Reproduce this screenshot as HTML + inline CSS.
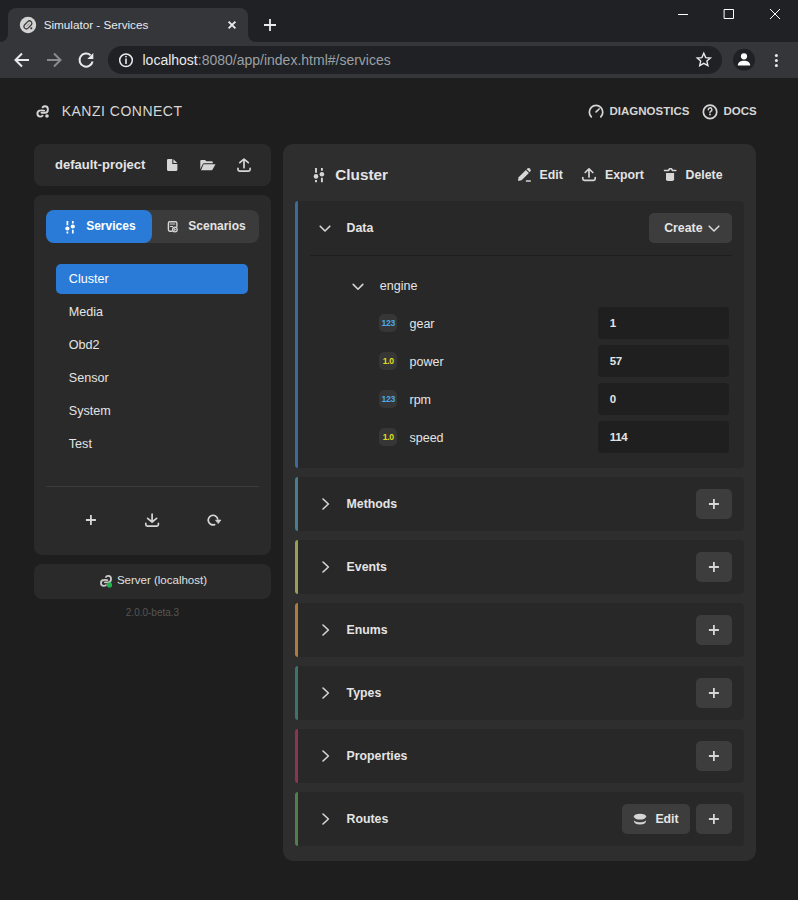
<!DOCTYPE html>
<html><head><meta charset="utf-8">
<style>
*{margin:0;padding:0;box-sizing:border-box}
html,body{width:798px;height:900px;overflow:hidden;background:#1e1e1e;font-family:"Liberation Sans",sans-serif}
.a{position:absolute}
.t{position:absolute;white-space:nowrap;line-height:1}
svg{position:absolute;overflow:visible}
/* chrome */
#strip{left:0;top:0;width:798px;height:42px;background:#202124}
#tab{left:8px;top:8px;width:240px;height:34px;background:#35363a;border-radius:8px 8px 0 0}
#toolbar{left:0;top:42px;width:798px;height:36px;background:#35363a}
#omni{left:108px;top:46px;width:614px;height:28px;background:#202124;border-radius:14px}
/* page */
.box{position:absolute;background:#2a2a2a;border-radius:8px}
.panel{position:absolute;background:#2e2e2e;border-radius:10px}
.sec{position:absolute;left:295px;width:449px;background:#282828;border-radius:4px}
.stripe{position:absolute;left:0;top:0;bottom:0;width:3px;border-radius:3px 0 0 3px}
.btn{position:absolute;background:#3d3d3d;border-radius:5px}
.inp{position:absolute;left:598px;width:131px;height:32px;background:#1f1f1f;border-radius:4px}
.badge{position:absolute;left:379px;width:18px;height:18px;background:#363636;border-radius:5px}
</style></head><body>
<div id="strip" class="a"></div>
<div id="tab" class="a"></div>
<div class="a" style="left:0;top:34px;width:8px;height:8px;background:#35363a"><div style="width:8px;height:8px;background:#202124;border-bottom-right-radius:8px"></div></div>
<div class="a" style="left:248px;top:34px;width:8px;height:8px;background:#35363a"><div style="width:8px;height:8px;background:#202124;border-bottom-left-radius:8px"></div></div>
<div id="toolbar" class="a"></div>
<div id="omni" class="a"></div>
<div class="t" style="left:43.7px;top:19.1px;font-size:11.7px;color:#e8eaed">Simulator - Services</div>
<div class="t" style="left:142.5px;top:53.15px;font-size:14px;color:#e8eaed">localhost<span style="color:#9aa0a6">:8080/app/index.html#/services</span></div>

<!-- header -->
<div class="t" style="left:61.7px;top:104.15px;font-size:14px;letter-spacing:0.5px;color:#d6d6d6">KANZI CONNECT</div>
<div class="t" style="left:609.5px;top:105.8px;font-size:11.5px;font-weight:bold;color:#d6d6d6">DIAGNOSTICS</div>
<div class="t" style="left:723.4px;top:105.8px;font-size:11.5px;font-weight:bold;color:#d6d6d6">DOCS</div>

<!-- sidebar -->
<div class="box" style="left:34px;top:144px;width:237px;height:42px"></div>
<div class="t" style="left:55px;top:158px;font-size:13px;font-weight:bold;color:#e4e4e4">default-project</div>
<div class="box" style="left:34px;top:195px;width:237px;height:360px"></div>
<div class="a" style="left:46px;top:210px;width:213px;height:33px;background:#3b3b3b;border-radius:8px"></div>
<div class="a" style="left:46px;top:210px;width:106px;height:33px;background:#2a7bd8;border-radius:8px"></div>
<div class="t" style="left:86.2px;top:219.8px;font-size:12px;font-weight:bold;color:#fff">Services</div>
<div class="t" style="left:188.3px;top:219.8px;font-size:12px;font-weight:bold;color:#e4e4e4">Scenarios</div>
<div class="a" style="left:56px;top:264px;width:192px;height:30px;background:#2a7bd8;border-radius:5px"></div>
<div class="t" style="left:68.8px;top:273.1px;font-size:12.6px;color:#fff">Cluster</div>
<div class="t" style="left:68.8px;top:306.1px;font-size:12.6px;color:#e4e4e4">Media</div>
<div class="t" style="left:68.8px;top:339.1px;font-size:12.6px;color:#e4e4e4">Obd2</div>
<div class="t" style="left:68.8px;top:372.1px;font-size:12.6px;color:#e4e4e4">Sensor</div>
<div class="t" style="left:68.8px;top:405.1px;font-size:12.6px;color:#e4e4e4">System</div>
<div class="t" style="left:68.8px;top:438.1px;font-size:12.6px;color:#e4e4e4">Test</div>
<div class="a" style="left:46px;top:486px;width:213px;height:1px;background:#3c3c3c"></div>
<div class="box" style="left:34px;top:564px;width:237px;height:35px"></div>
<div class="t" style="left:116.9px;top:575px;font-size:11.5px;color:#e0e0e0">Server (localhost)</div>
<div class="t" style="left:125.8px;top:607.5px;font-size:10px;color:#555">2.0.0-beta.3</div>

<!-- right panel -->
<div class="panel" style="left:283px;top:144px;width:473px;height:717px"></div>
<div class="t" style="left:335.3px;top:166.8px;font-size:15.3px;font-weight:bold;color:#e4e4e4">Cluster</div>
<div class="t" style="left:539.5px;top:168.9px;font-size:12.3px;font-weight:bold;color:#e4e4e4">Edit</div>
<div class="t" style="left:605px;top:168.9px;font-size:12.3px;font-weight:bold;color:#e4e4e4">Export</div>
<div class="t" style="left:685.6px;top:168.9px;font-size:12.3px;font-weight:bold;color:#e4e4e4">Delete</div>

<div class="sec" style="top:201px;height:267px"><div class="stripe" style="background:#3d6a9c"></div></div>
<div class="t" style="left:346.6px;top:221.79px;font-size:12.3px;font-weight:bold;color:#e4e4e4">Data</div>
<div class="sec" style="top:477px;height:54px"><div class="stripe" style="background:#467f8f"></div></div>
<div class="t" style="left:346.6px;top:497.59px;font-size:12.3px;font-weight:bold;color:#e4e4e4">Methods</div>
<div class="btn" style="left:696px;top:489px;width:36px;height:30px"></div>
<div class="sec" style="top:540px;height:54px"><div class="stripe" style="background:#9c9c56"></div></div>
<div class="t" style="left:346.6px;top:560.59px;font-size:12.3px;font-weight:bold;color:#e4e4e4">Events</div>
<div class="btn" style="left:696px;top:552px;width:36px;height:30px"></div>
<div class="sec" style="top:603px;height:54px"><div class="stripe" style="background:#b07a3e"></div></div>
<div class="t" style="left:346.6px;top:623.59px;font-size:12.3px;font-weight:bold;color:#e4e4e4">Enums</div>
<div class="btn" style="left:696px;top:615px;width:36px;height:30px"></div>
<div class="sec" style="top:666px;height:54px"><div class="stripe" style="background:#3b7370"></div></div>
<div class="t" style="left:346.6px;top:686.59px;font-size:12.3px;font-weight:bold;color:#e4e4e4">Types</div>
<div class="btn" style="left:696px;top:678px;width:36px;height:30px"></div>
<div class="sec" style="top:729px;height:54px"><div class="stripe" style="background:#8e3450"></div></div>
<div class="t" style="left:346.6px;top:749.59px;font-size:12.3px;font-weight:bold;color:#e4e4e4">Properties</div>
<div class="btn" style="left:696px;top:741px;width:36px;height:30px"></div>
<div class="sec" style="top:792px;height:54px"><div class="stripe" style="background:#4f7f4f"></div></div>
<div class="t" style="left:346.6px;top:812.59px;font-size:12.3px;font-weight:bold;color:#e4e4e4">Routes</div>
<div class="btn" style="left:696px;top:804px;width:36px;height:30px"></div>
<div class="btn" style="left:649px;top:213px;width:83px;height:30px"></div>
<div class="t" style="left:664.2px;top:221.59px;font-size:12.3px;font-weight:bold;color:#e4e4e4">Create</div>
<div class="btn" style="left:622px;top:804px;width:68px;height:30px"></div>
<div class="t" style="left:655.4px;top:812.59px;font-size:12.3px;font-weight:bold;color:#e4e4e4">Edit</div>
<div class="a" style="left:310px;top:255px;width:422px;height:1px;background:#1e1e1e"></div>
<div class="t" style="left:379.8px;top:280.4px;font-size:12.5px;color:#e4e4e4">engine</div>
<div class="inp" style="top:307px"></div>
<div class="t" style="left:609.7px;top:318.3px;font-size:11.5px;font-weight:bold;letter-spacing:-0.3px;color:#e4e4e4">1</div>
<div class="badge" style="top:314px"></div>
<div class="t" style="left:409.5px;top:318.4px;font-size:12.5px;color:#e4e4e4">gear</div>
<div class="inp" style="top:345px"></div>
<div class="t" style="left:609.7px;top:356.3px;font-size:11.5px;font-weight:bold;letter-spacing:-0.3px;color:#e4e4e4">57</div>
<div class="badge" style="top:352px"></div>
<div class="t" style="left:409.5px;top:356.4px;font-size:12.5px;color:#e4e4e4">power</div>
<div class="inp" style="top:383px"></div>
<div class="t" style="left:609.7px;top:394.3px;font-size:11.5px;font-weight:bold;letter-spacing:-0.3px;color:#e4e4e4">0</div>
<div class="badge" style="top:390px"></div>
<div class="t" style="left:409.5px;top:394.4px;font-size:12.5px;color:#e4e4e4">rpm</div>
<div class="inp" style="top:421px"></div>
<div class="t" style="left:609.7px;top:432.3px;font-size:11.5px;font-weight:bold;letter-spacing:-0.3px;color:#e4e4e4">114</div>
<div class="badge" style="top:428px"></div>
<div class="t" style="left:409.5px;top:432.4px;font-size:12.5px;color:#e4e4e4">speed</div>
<!-- chrome icons -->
<svg width="798" height="900" style="left:0;top:0" fill="none" stroke-linecap="round" stroke-linejoin="round">
  <!-- favicon -->
  <circle cx="28" cy="25" r="8.2" fill="#d3d3d3" stroke="none"/>
  <rect x="-4.6" y="-2.4" width="9.2" height="4.8" rx="2.4" transform="translate(27.9 24.9) rotate(-45)" stroke="#3a3a3a" stroke-width="1.3"/>
  <path d="M26.6 26.2 L29.2 23.6" stroke="#8a8a8a" stroke-width="1"/>
  <rect x="30.4" y="27.4" width="1.8" height="1.8" fill="#333" stroke="none"/>
  <!-- tab close -->
  <path d="M228.6 21.6 L235.4 28.4 M235.4 21.6 L228.6 28.4" stroke="#e8eaed" stroke-width="1.9" stroke-linecap="butt"/>
  <!-- new tab -->
  <path d="M270 19 V31 M264 25 H276" stroke="#e8eaed" stroke-width="1.8" stroke-linecap="butt"/>
  <!-- window controls -->
  <path d="M678 14.5 H688" stroke="#fff" stroke-width="1" stroke-linecap="butt"/>
  <rect x="724.5" y="9.5" width="9" height="9" stroke="#fff" stroke-width="1"/>
  <path d="M770 9 L780 19 M780 9 L770 19" stroke="#fff" stroke-width="1" stroke-linecap="butt"/>
  <!-- back / fwd -->
  <path d="M29 60 H16 M22 53.5 L15.5 60 L22 66.5" stroke="#e8eaed" stroke-width="2" stroke-linecap="butt" stroke-linejoin="miter"/>
  <path d="M47 60 H60 M54 53.5 L60.5 60 L54 66.5" stroke="#8a8b8e" stroke-width="2" stroke-linecap="butt" stroke-linejoin="miter"/>
  <!-- reload -->
  <path d="M90.6 55.2 A6.6 6.6 0 1 0 92.6 61.5" stroke="#e8eaed" stroke-width="2" stroke-linecap="butt"/>
  <path d="M93.3 53 V59 H87.3 Z" fill="#e8eaed" stroke="none"/>
  <!-- info -->
  <circle cx="126" cy="60.3" r="6.3" stroke="#e8eaed" stroke-width="1.5"/>
  <path d="M126 58.6 V64" stroke="#e8eaed" stroke-width="1.6" stroke-linecap="butt"/>
  <circle cx="126" cy="56.6" r="0.9" fill="#e8eaed" stroke="none"/>
  <!-- star -->
  <path d="M703.8 53.3 L705.7 57.6 L710.4 58 L706.9 61.1 L707.9 65.7 L703.8 63.3 L699.7 65.7 L700.7 61.1 L697.2 58 L701.9 57.6 Z" stroke="#e8eaed" stroke-width="1.4" stroke-linejoin="miter"/>
  <!-- profile -->
  <circle cx="744" cy="59.8" r="11" fill="#202124" stroke="none"/>
  <circle cx="744" cy="56.3" r="3.1" fill="#fff" stroke="none"/>
  <path d="M737.8 65.5 C737.8 62 741 60.8 744 60.8 C747 60.8 750.2 62 750.2 65.5 Z" fill="#fff" stroke="none"/>
  <!-- menu dots -->
  <circle cx="776.4" cy="55.6" r="1.5" fill="#e8eaed" stroke="none"/>
  <circle cx="776.4" cy="60.5" r="1.5" fill="#e8eaed" stroke="none"/>
  <circle cx="776.4" cy="65.4" r="1.5" fill="#e8eaed" stroke="none"/>
</svg>
<!-- page icons -->
<svg width="798" height="900" style="left:0;top:0" fill="none" stroke="#d6d6d6" stroke-width="1.7" stroke-linecap="round" stroke-linejoin="round">
  <!-- kanzi logo -->
  <g stroke-width="1.9"><path d="M44.1 110.6 C43 110.4 41.8 110.3 40.6 110.4 C38.8 110.5 37.4 112 37.4 113.6 C37.4 115.3 38.8 116.6 40.4 116.6 C41.3 116.6 42 116.3 42.6 115.7"/>
  <path d="M41.5 112.8 H44.9 C46.6 112.8 47.9 111.3 47.9 109.4 C47.9 107.6 46.6 106.2 45 106.2 C44 106.2 43.2 106.6 42.6 107.3"/></g>
  <circle cx="47" cy="116" r="1.8" fill="#d6d6d6" stroke="none"/>
  <!-- gauge -->
  <path d="M591.3 116.9 A6.7 6.7 0 1 1 600.8 116.9"/>
  <path d="M596.1 111.8 L599.1 109"/>
  <!-- help -->
  <circle cx="710.05" cy="111.9" r="6.7"/>
  <path d="M708.3 109.8 A1.8 1.8 0 1 1 710.6 111.4 Q710 111.7 710 112.6" stroke-width="1.5"/>
  <circle cx="710" cy="114.5" r="0.9" fill="#d6d6d6" stroke="none"/>
  <!-- file -->
  <path d="M167 160.2 Q167 159.1 168.1 159.1 H172.3 V164 H177.4 V169.8 Q177.4 170.9 176.3 170.9 H168.1 Q167 170.9 167 169.8 Z" fill="#d6d6d6" stroke="none"/>
  <path d="M173.4 159.2 L177.3 163.1 H173.4 Z" fill="#d6d6d6" stroke="none"/>
  <!-- folder open -->
  <path d="M200.3 161 Q200.3 159.9 201.3 159.9 H205 L206.4 161.3 H211.8 Q212.8 161.3 212.8 162.3 V163.2 H204.2 Q203.2 163.2 202.8 164.1 L200.3 169.2 Z" fill="#d6d6d6" stroke="none"/>
  <path d="M203.6 164.3 H215.5 L212.6 169.5 Q212.3 170.2 211.5 170.2 H201 Z" fill="#d6d6d6" stroke="none"/>
  <!-- upload -->
  <path d="M244 167.7 V159.6 M239.8 162.7 L244 159.1 L248.3 162.7"/>
  <path d="M238 168.4 V169.6 Q238 171.1 239.5 171.1 H248.6 Q250.1 171.1 250.1 169.6 V168.4"/>
  <!-- services tab sliders -->
  <g stroke="#fff" stroke-width="1.7" stroke-linecap="butt">
    <path d="M67.4 221.1 V225.3 M67.4 231.6 V233.5 M72.8 221.1 V223.5 M72.8 229.8 V233.5"/>
    <circle cx="67.4" cy="228.5" r="2.1" fill="#fff" stroke="none"/>
    <circle cx="72.8" cy="226.5" r="2.1" fill="#fff" stroke="none"/>
  </g>
  <!-- scenarios -->
  <g stroke-width="1.4">
    <path d="M172 231.2 H169.8 Q168.4 231.2 168.4 229.8 V223.2 Q168.4 221.8 169.8 221.8 H175.5 Q176.9 221.8 176.9 223.2 V226.5"/>
    <path d="M170.3 224 H174.8 M170.3 226.5 H172.6" stroke-width="1.2"/>
    <circle cx="174.9" cy="229.5" r="2.3" stroke-width="1.3"/>
    <path d="M174.4 228.5 L175.9 229.5 L174.4 230.5 Z" fill="#d6d6d6" stroke-width="0.6"/>
  </g>
  <!-- bottom icons -->
  <path d="M90.9 515 V525 M85.9 520 H95.9" stroke-width="1.8" stroke-linecap="butt"/>
  <path d="M152.1 514.2 V521.8 M147.6 518.4 L152.1 522 L156.6 518.4"/>
  <path d="M145.8 523.4 V524.6 Q145.8 526.2 147.4 526.2 H156.8 Q158.4 526.2 158.4 524.6 V523.4"/>
  <path d="M214.64 524.6 A4.8 4.8 0 1 1 217.7 518.9"/>
  <path d="M215.9 520.1 H220.9 L218.4 523.3 Z" fill="#d6d6d6" stroke-width="0.8"/>
  <!-- server link -->
  <g stroke="#c8c8c8" stroke-width="1.9" transform="translate(100 575) scale(0.96) translate(-36.4 -105.2)">
    <path d="M44.1 110.6 C43 110.4 41.8 110.3 40.6 110.4 C38.8 110.5 37.4 112 37.4 113.6 C37.4 115.3 38.8 116.6 40.4 116.6 C41.3 116.6 42 116.3 42.6 115.7"/>
    <path d="M41.5 112.8 H44.9 C46.6 112.8 47.9 111.3 47.9 109.4 C47.9 107.6 46.6 106.2 45 106.2 C44 106.2 43.2 106.6 42.6 107.3"/>
  </g>
  <circle cx="109.5" cy="584.9" r="2.6" fill="#20b74a" stroke="none"/>
  <!-- cluster header sliders -->
  <g stroke="#d6d6d6" stroke-width="1.9" stroke-linecap="butt">
    <path d="M316 168.1 V172.8 M316 180 V182.2 M321.9 168.1 V170.8 M321.9 177.8 V182.2"/>
    <circle cx="316" cy="176.4" r="2.3" fill="#d6d6d6" stroke="none"/>
    <circle cx="321.9" cy="174.2" r="2.3" fill="#d6d6d6" stroke="none"/>
  </g>
  <!-- pencil -->
  <path d="M518 180.9 L518.6 177.3 L525.9 170 L528.9 173 L521.6 180.3 Z" fill="#d6d6d6" stroke="none"/>
  <path d="M526.6 169.3 L527.3 168.6 Q528.6 167.5 529.9 168.6 L530.3 169 Q531.4 170.3 530.3 171.6 L529.6 172.3 Z" fill="#d6d6d6" stroke="none"/>
  <path d="M525.9 181 H530.8" stroke-width="1.5" stroke-linecap="butt"/>
  <!-- export -->
  <path d="M589 176.9 V169.4 M585.2 172.5 L589 168.9 L592.8 172.5"/>
  <path d="M582.8 177.5 V178.8 Q582.8 180.4 584.4 180.4 H593.6 Q595.2 180.4 595.2 178.8 V177.5"/>
  <!-- trash -->
  <path d="M664.5 170.5 H668.5 L669.6 168.8 H671.4 L672.5 170.5 H675.8" stroke-width="1.6"/>
  <path d="M666 172.9 H674.1 V179.2 Q674.1 181 672.3 181 H667.8 Q666 181 666 179.2 Z" fill="#d6d6d6" stroke="none"/>
  <!-- chevrons -->
  <path d="M320.2 226.2 L325 231 L329.8 226.2" stroke-width="1.6"/>
  <path d="M353.2 284.4 L358 289.2 L362.8 284.4" stroke-width="1.6"/>
  <path d="M709.2 226.2 L714 231 L718.8 226.2" stroke-width="1.6"/>
  <path d="M323 499 L328.4 504 L323 509" stroke-width="1.6" transform="translate(0 0)"/>
  <path d="M323 562 L328.4 567 L323 572" stroke-width="1.6"/>
  <path d="M323 625 L328.4 630 L323 635" stroke-width="1.6"/>
  <path d="M323 688 L328.4 693 L323 698" stroke-width="1.6"/>
  <path d="M323 751 L328.4 756 L323 761" stroke-width="1.6"/>
  <path d="M323 814 L328.4 819 L323 824" stroke-width="1.6"/>
  <!-- plus buttons -->
  <g stroke-width="1.8" stroke-linecap="butt">
    <path d="M713.9 499 V509 M708.9 504 H718.9"/>
    <path d="M713.9 562 V572 M708.9 567 H718.9"/>
    <path d="M713.9 625 V635 M708.9 630 H718.9"/>
    <path d="M713.9 688 V698 M708.9 693 H718.9"/>
    <path d="M713.9 751 V761 M708.9 756 H718.9"/>
    <path d="M713.9 814 V824 M708.9 819 H718.9"/>
  </g>
  <!-- database -->
  <ellipse cx="640" cy="816.6" rx="6.2" ry="2.9" fill="#d6d6d6" stroke="none"/>
  <path d="M633.8 820.2 Q634 824.6 640 824.6 Q646 824.6 646.2 820.2 Q644.5 822.2 640 822.2 Q635.5 822.2 633.8 820.2 Z" fill="#d6d6d6" stroke="none"/>
</svg>
<div class="t" style="left:381.5px;top:319.2px;font-size:8.6px;font-weight:bold;color:#4aa9ec;letter-spacing:-0.3px">123</div>
<div class="t" style="left:382.7px;top:357.2px;font-size:8.6px;font-weight:bold;color:#e2dc1e;letter-spacing:-0.3px">1.0</div>
<div class="t" style="left:381.5px;top:395.2px;font-size:8.6px;font-weight:bold;color:#4aa9ec;letter-spacing:-0.3px">123</div>
<div class="t" style="left:382.7px;top:433.2px;font-size:8.6px;font-weight:bold;color:#e2dc1e;letter-spacing:-0.3px">1.0</div>

</body></html>
